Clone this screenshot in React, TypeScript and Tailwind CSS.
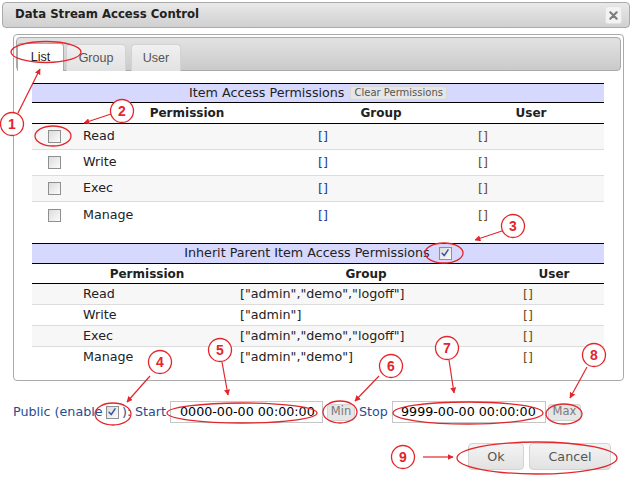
import React from "react";

const RED = "#e3262b";

function Checkbox({ checked = false }: { checked?: boolean }) {
  return (
    <div className="relative w-[13px] h-[13px] border border-[#8e8f8f] bg-gradient-to-br from-[#dcdcdc] to-[#fbfbfb] shrink-0">
      {checked && (
        <svg viewBox="0 0 13 13" className="absolute left-0 top-0 w-[11px] h-[11px]">
          <path d="M2.5 6.2 L5 9 L9.5 2.2" fill="none" stroke="#3b54a3" strokeWidth="1.8" strokeLinecap="round" strokeLinejoin="round" />
        </svg>
      )}
    </div>
  );
}

const perms = ["Read", "Write", "Exec", "Manage"];
const groups2 = ['["admin","demo","logoff"]', '["admin"]', '["admin","demo","logoff"]', '["admin","demo"]'];

function Annotations() {
  const circles = [
    { n: 1, cx: 12, cy: 124 },
    { n: 2, cx: 122, cy: 111 },
    { n: 3, cx: 513, cy: 226 },
    { n: 4, cx: 160, cy: 362 },
    { n: 5, cx: 220, cy: 350 },
    { n: 6, cx: 391, cy: 366 },
    { n: 7, cx: 447, cy: 348 },
    { n: 8, cx: 594, cy: 355 },
    { n: 9, cx: 403, cy: 457 },
  ];
  const ellipses = [
    { cx: 46, cy: 52, rx: 35, ry: 10.5 },
    { cx: 53, cy: 136, rx: 18, ry: 10 },
    { cx: 444, cy: 253, rx: 19, ry: 10 },
    { cx: 113, cy: 414, rx: 18, ry: 11 },
    { cx: 242, cy: 413, rx: 75, ry: 10 },
    { cx: 340, cy: 412, rx: 17, ry: 11 },
    { cx: 468, cy: 413, rx: 75, ry: 11 },
    { cx: 564, cy: 414, rx: 18, ry: 10 },
    { cx: 537, cy: 458, rx: 80, ry: 16 },
  ];
  const arrows = [
    [18, 113, 40, 69],
    [111, 114, 84, 123],
    [502, 231, 475, 240],
    [150, 376, 127, 402],
    [222, 362, 228, 395],
    [379, 376, 355, 401],
    [449, 360, 454, 393],
    [587, 367, 570, 398],
    [423, 457, 453, 457],
  ];
  return (
    <svg className="absolute left-0 top-0 pointer-events-none" width="632" height="482" viewBox="0 0 632 482">
      <defs>
        <marker id="ah" viewBox="0 0 10 10" refX="9" refY="5" markerWidth="5" markerHeight="5" orient="auto">
          <path d="M0,0 L10,5 L0,10 z" fill={RED} />
        </marker>
      </defs>
      {ellipses.map((e, i) => (
        <ellipse key={i} cx={e.cx} cy={e.cy} rx={e.rx} ry={e.ry} fill="none" stroke={RED} strokeWidth="1.3" />
      ))}
      {arrows.map((a, i) => (
        <line key={i} x1={a[0]} y1={a[1]} x2={a[2]} y2={a[3]} stroke={RED} strokeWidth="1.2" markerEnd="url(#ah)" />
      ))}
      {circles.map((c) => (
        <g key={c.n}>
          <circle cx={c.cx} cy={c.cy} r="11.5" fill="white" stroke={RED} strokeWidth="1.3" />
          <text x={c.cx} y={c.cy + 5} textAnchor="middle" fontFamily="Liberation Sans, Arial, sans-serif" fontWeight="bold" fontSize="14" fill={RED}>
            {c.n}
          </text>
        </g>
      ))}
    </svg>
  );
}

export default function App() {
  return (
    <div className="relative w-[632px] h-[482px] bg-white overflow-hidden font-['DejaVu_Sans',sans-serif] text-[#222]">
      {/* Title bar */}
      <div className="mx-[2px] mt-[2px] h-[26px] rounded-[4px] border border-[#aaa] bg-gradient-to-b from-[#e9e9e9] to-[#d0d0d0] flex items-center justify-between pl-[12px] pr-[7px]">
        <span className="font-bold text-[11.7px] text-[#222]">Data Stream Access Control</span>
        <div className="w-[17px] h-[18px] rounded-[3px] bg-[#f3f3f3] border border-[#e2e2e2] flex items-center justify-center">
          <svg viewBox="0 0 10 10" className="w-[9px] h-[9px]">
            <path d="M1.5 1.5 L8.5 8.5 M8.5 1.5 L1.5 8.5" stroke="#7d7d7d" strokeWidth="2.4" strokeLinecap="round" />
          </svg>
        </div>
      </div>

      {/* Tabs panel */}
      <div className="mt-[6px] ml-[13px] w-[611px] h-[347px] border border-[#aaa] rounded-[4px] p-[2px]">
        <div className="h-[34px] border border-[#aaa] rounded-[4px] bg-gradient-to-b from-[#e2e2e2] to-[#cacaca] flex items-end font-['Liberation_Sans',Arial,sans-serif] text-[12.5px]">
          <div className="relative -mb-px w-[47px] h-[28px] bg-white border border-[#aaa] border-b-0 rounded-t-[4px] flex items-center justify-center text-[#212121]">
            List
          </div>
          <div className="-mb-px ml-[2px] w-[60px] h-[27px] bg-gradient-to-b from-[#f0f0f0] to-[#e2e2e2] border border-[#d3d3d3] border-b-0 rounded-t-[4px] flex items-center justify-center text-[#555]">
            Group
          </div>
          <div className="-mb-px ml-[5px] w-[50px] h-[27px] bg-gradient-to-b from-[#f0f0f0] to-[#e2e2e2] border border-[#d3d3d3] border-b-0 rounded-t-[4px] flex items-center justify-center text-[#555]">
            User
          </div>
        </div>

        <div className="ml-[16px] mt-[12px] w-[572px] text-[12.7px]">
          {/* Table 1 */}
          <div className="h-[20px] border-y border-black bg-[#d6d8fd] flex items-center justify-center gap-[6px] leading-none">
            <span>Item Access Permissions</span>
            <span className="h-[14px] px-[3px] flex items-center bg-[#e6e6e6] border border-[#d8d8d8] rounded-[2px] text-[10px] text-[#555]">
              Clear Permissions
            </span>
          </div>
          <div className="h-[21px] border-b border-black grid grid-cols-[38px_234px_154px_146px] items-center font-bold text-[12px] leading-none">
            <div />
            <div className="text-center">Permission</div>
            <div className="text-center">Group</div>
            <div className="text-center">User</div>
          </div>
          {perms.map((p, i) => (
            <div
              key={p}
              className={`h-[26px] grid grid-cols-[38px_234px_154px_146px] items-center leading-none ${i % 2 === 0 ? "bg-[#f7f7f7]" : "bg-white"} ${i < 3 ? "border-b border-[#dcdcdc]" : ""}`}
            >
              <div className="pl-[16px]">
                <Checkbox />
              </div>
              <div className="pl-[13px]">{p}</div>
              <div className="pl-[14px] text-[#233a96]">[]</div>
              <div className="pl-[20px] text-[#6e4c18]">[]</div>
            </div>
          ))}

          {/* Table 2 */}
          <div className="mt-[15px] h-[21px] border-y border-black bg-[#d6d8fd] flex items-center justify-center gap-[9px] leading-none">
            <span>Inherit Parent Item Access Permissions</span>
            <Checkbox checked />
          </div>
          <div className="h-[20px] border-b border-black grid grid-cols-[230px_208px_134px] items-center font-bold text-[12px] leading-none">
            <div className="text-center">Permission</div>
            <div className="text-center">Group</div>
            <div className="text-center pl-[34px]">User</div>
          </div>
          {perms.map((p, i) => (
            <div
              key={p}
              className={`h-[21px] grid grid-cols-[208px_283px_81px] items-center leading-none ${i % 2 === 0 ? "bg-[#f7f7f7]" : "bg-white"} ${i < 3 ? "border-b border-[#dcdcdc]" : ""}`}
            >
              <div className="pl-[51px]">{p}</div>
              <div>{groups2[i]}</div>
              <div className="text-[#6e4c18]">[]</div>
            </div>
          ))}
        </div>
      </div>

      {/* Public row */}
      <div className="mt-[20px] ml-[13px] h-[22px] flex items-center text-[12.7px] leading-none text-[#1f4e92]">
        <span className="w-[93px] whitespace-nowrap">Public (enable</span>
        <Checkbox checked />
        <span className="ml-[3px] w-[13px]">):</span>
        <span className="w-[32px]">Start</span>
        <div className="ml-[3px] w-[153px] h-[22px] border border-[#c6c6c6] bg-white flex items-center pl-[9px] text-black whitespace-nowrap">
          0000-00-00 00:00:00
        </div>
        <div className="ml-[4px] w-[28px] h-[17px] rounded-[3px] bg-[#e6e6e6] border border-[#d3d3d3] flex items-center justify-center text-[11.5px] text-[#7a7a7a]">
          Min
        </div>
        <span className="ml-[4px] w-[33px]">Stop</span>
        <div className="w-[154px] h-[22px] border border-[#c6c6c6] bg-white flex items-center pl-[8px] text-black whitespace-nowrap">
          9999-00-00 00:00:00
        </div>
        <div className="ml-[2px] w-[33px] h-[17px] rounded-[3px] bg-[#e6e6e6] border border-[#d3d3d3] flex items-center justify-center text-[11.5px] text-[#7a7a7a]">
          Max
        </div>
      </div>

      {/* Buttons */}
      <div className="mt-[20px] flex justify-end pr-[21px] gap-[5px] text-[12.7px] text-[#555]">
        <div className="w-[56px] h-[27px] rounded-[4px] border border-[#d3d3d3] bg-gradient-to-b from-[#f4f4f4] to-[#e2e2e2] flex items-center justify-center">
          Ok
        </div>
        <div className="w-[82px] h-[27px] rounded-[4px] border border-[#d3d3d3] bg-gradient-to-b from-[#f4f4f4] to-[#e2e2e2] flex items-center justify-center">
          Cancel
        </div>
      </div>

      <Annotations />
    </div>
  );
}
